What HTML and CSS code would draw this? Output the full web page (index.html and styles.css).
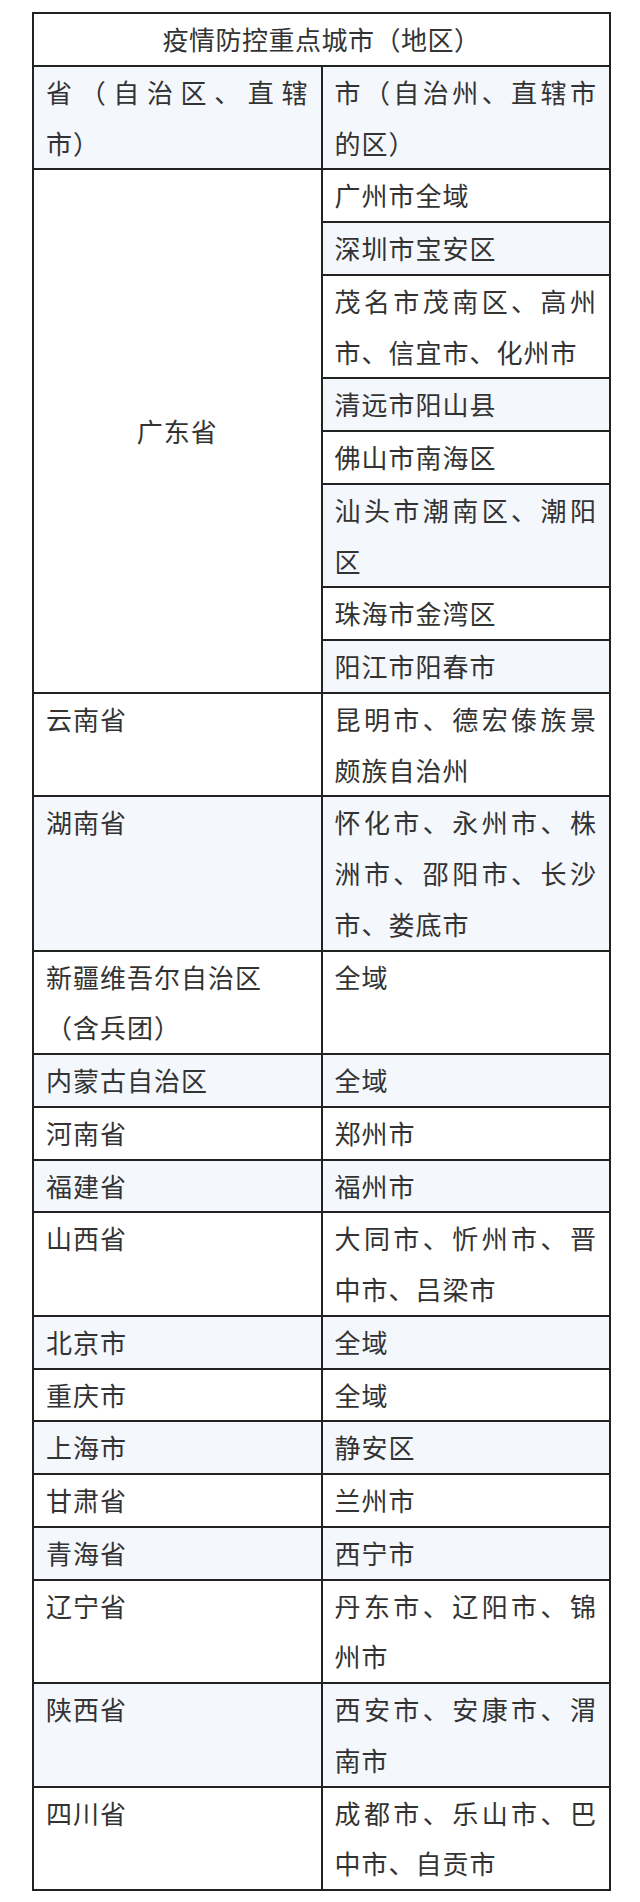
FILE: index.html
```html
<!DOCTYPE html>
<html lang="zh-CN">
<head>
<meta charset="utf-8">
<title>疫情防控重点城市（地区）</title>
<link rel="stylesheet" href="styles.css">
</head>
<body>
<div class="page">
  <table class="grid">
    <colgroup><col class="c1"><col class="c2"></colgroup>
    <tbody>
      <tr><td class="title" colspan="2">疫情防控重点城市（地区）</td></tr>
      <tr><td>省（自治区、直辖市）</td><td>市（自治州、直辖市的区）</td></tr>
      <tr><td class="mid" rowspan="8">广东省</td><td>广州市全域</td></tr>
      <tr><td>深圳市宝安区</td></tr>
      <tr><td>茂名市茂南区、高州市、信宜市、化州市</td></tr>
      <tr><td>清远市阳山县</td></tr>
      <tr><td>佛山市南海区</td></tr>
      <tr><td>汕头市潮南区、潮阳区</td></tr>
      <tr><td>珠海市金湾区</td></tr>
      <tr><td>阳江市阳春市</td></tr>
      <tr><td>云南省</td><td>昆明市、德宏傣族景颇族自治州</td></tr>
      <tr><td>湖南省</td><td>怀化市、永州市、株洲市、邵阳市、长沙市、娄底市</td></tr>
      <tr><td>新疆维吾尔自治区<br>（含兵团）</td><td>全域</td></tr>
      <tr><td>内蒙古自治区</td><td>全域</td></tr>
      <tr><td>河南省</td><td>郑州市</td></tr>
      <tr><td>福建省</td><td>福州市</td></tr>
      <tr><td>山西省</td><td>大同市、忻州市、晋中市、吕梁市</td></tr>
      <tr><td>北京市</td><td>全域</td></tr>
      <tr><td>重庆市</td><td>全域</td></tr>
      <tr><td>上海市</td><td>静安区</td></tr>
      <tr><td>甘肃省</td><td>兰州市</td></tr>
      <tr><td>青海省</td><td>西宁市</td></tr>
      <tr><td>辽宁省</td><td>丹东市、辽阳市、锦州市</td></tr>
      <tr><td>陕西省</td><td>西安市、安康市、渭南市</td></tr>
      <tr><td>四川省</td><td>成都市、乐山市、巴中市、自贡市</td></tr>
    </tbody>
  </table>
</div>
</body>
</html>
```

FILE: styles.css
```css
html, body {
  margin: 0;
  padding: 0;
  background: #ffffff;
}

.page {
  padding: 12px 0 0 32px;
}

.grid {
  width: 579px;
  table-layout: fixed;
  border-collapse: separate;
  border-spacing: 0;
  border-top: 2px solid #222222;
  border-left: 2px solid #222222;
  font-family: "Noto Sans CJK SC", "Noto Sans", sans-serif;
  font-size: 26px;
  line-height: 50.75px;
  letter-spacing: 1px;
  color: #333333;
  text-spacing-trim: space-all;
}

.c1, .c2 {
  width: 50%;
}

.grid td {
  padding: 0 12px;
  border-right: 2px solid #222222;
  border-bottom: 2px solid #222222;
  vertical-align: top;
  text-align: justify;
  text-spacing-trim: space-all;
  background: #ffffff;
}

.grid tr:nth-child(even) td {
  background: #f4f7fc;
}

.grid td.title {
  text-align: center;
  letter-spacing: 0.5px;
}

.grid td.mid {
  vertical-align: middle;
  text-align: center;
}
```
